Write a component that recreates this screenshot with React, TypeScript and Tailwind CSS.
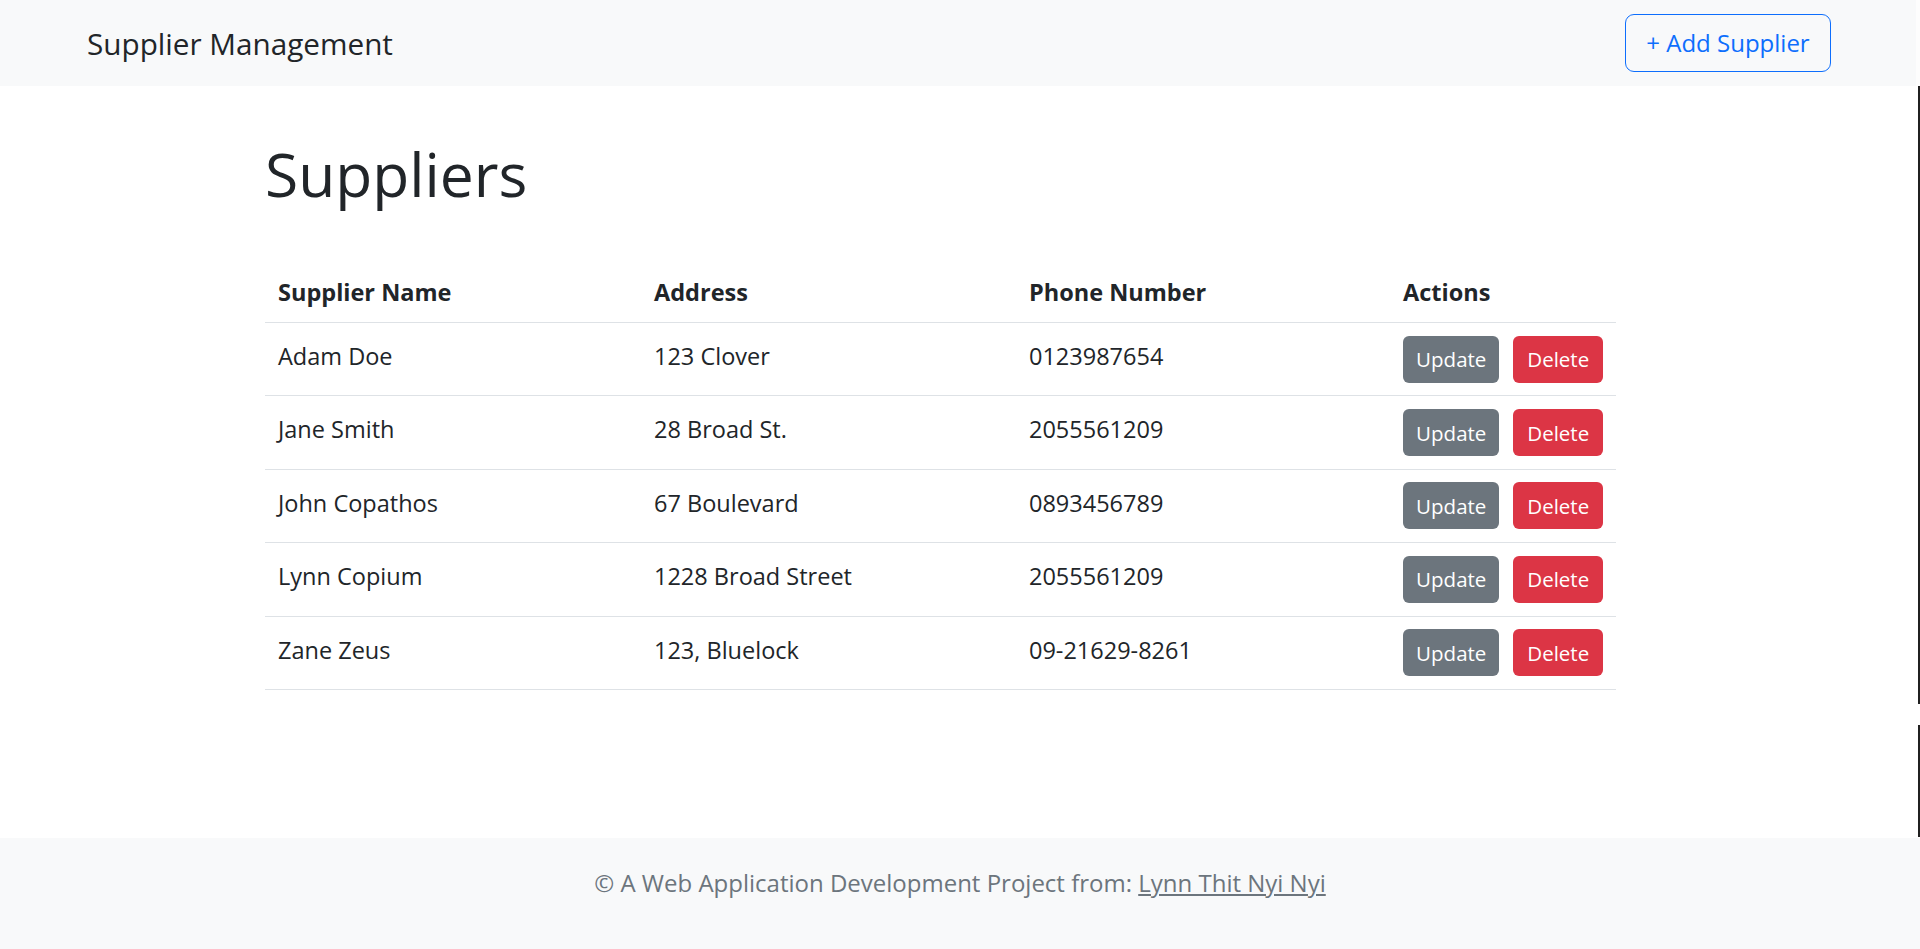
import React from 'react';

interface Supplier {
  name: string;
  address: string;
  phone: string;
}

const suppliers: Supplier[] = [
  { name: 'Adam Doe', address: '123 Clover', phone: '0123987654' },
  { name: 'Jane Smith', address: '28 Broad St.', phone: '2055561209' },
  { name: 'John Copathos', address: '67 Boulevard', phone: '0893456789' },
  { name: 'Lynn Copium', address: '1228 Broad Street', phone: '2055561209' },
  { name: 'Zane Zeus', address: '123, Bluelock', phone: '09-21629-8261' },
];

function Navbar() {
  return (
    <nav className="flex h-[86px] items-center justify-between bg-[#f8f9fa] pl-[87px] pr-[89px]">
      <a href="#" className="text-[29.7px] leading-[43px] text-[#212529]">
        Supplier Management
      </a>
      <button className="flex h-[58px] w-[206px] items-center justify-center rounded-[9px] border-[1.5px] border-[#0d6efd] text-[24px] leading-[36px] text-[#0d6efd]">
        + Add Supplier
      </button>
    </nav>
  );
}

function SupplierTable() {
  return (
    <table className="w-[1351px] table-fixed text-[23.5px] leading-[36px] text-[#212529]">
      <colgroup>
        <col className="w-[376px]" />
        <col className="w-[375px]" />
        <col className="w-[374px]" />
        <col className="w-[226px]" />
      </colgroup>
      <thead>
        <tr className="border-b border-[#dee2e6]">
          <th className="px-[13px] py-[12px] text-left font-bold">Supplier Name</th>
          <th className="px-[13px] py-[12px] text-left font-bold">Address</th>
          <th className="px-[13px] py-[12px] text-left font-bold">Phone Number</th>
          <th className="px-[13px] py-[12px] text-left font-bold">Actions</th>
        </tr>
      </thead>
      <tbody>
        {suppliers.map((s) => (
          <tr key={s.name} className="border-b border-[#dee2e6]">
            <td className="px-[13px] pt-[15px] align-top">{s.name}</td>
            <td className="px-[13px] pt-[15px] align-top">{s.address}</td>
            <td className="px-[13px] pt-[15px] align-top">{s.phone}</td>
            <td className="px-[13px] py-[12.7px] align-top">
              <div className="flex gap-[14px]">
                <button className="flex h-[47px] w-[97px] items-center justify-center rounded-[6px] bg-[#6c757d] text-[20.5px] text-white">
                  Update
                </button>
                <button className="flex h-[47px] w-[90px] items-center justify-center rounded-[6px] bg-[#dc3545] text-[20.5px] text-white">
                  Delete
                </button>
              </div>
            </td>
          </tr>
        ))}
      </tbody>
    </table>
  );
}

export default function App() {
  return (
    <div className="flex min-h-screen flex-col bg-white font-['Open_Sans',sans-serif] text-[#212529]">
      <Navbar />
      <main className="flex-1 pl-[265px]">
        <h1 className="mb-[52px] mt-[52px] text-[60.5px] font-normal leading-[72px]">Suppliers</h1>
        <SupplierTable />
      </main>
      <footer className="h-[111px] bg-[#f8f9fa] pt-[27px] text-center text-[24px] leading-[36px] text-[#6c757d]">
        © A Web Application Development Project from:{' '}
        <a href="#" className="text-[#6c757d] underline">
          Lynn Thit Nyi Nyi
        </a>
      </footer>
      {/* window scrollbar edge */}
      <div className="pointer-events-none fixed right-0 top-0 h-[86px] w-[4px] bg-[#fdfdfd]" />
      <div className="pointer-events-none fixed right-0 top-[86px] h-[618px] w-[2px] bg-[#202020]" />
      <div className="pointer-events-none fixed right-0 top-[725px] h-[112px] w-[2px] bg-[#202020]" />
    </div>
  );
}
